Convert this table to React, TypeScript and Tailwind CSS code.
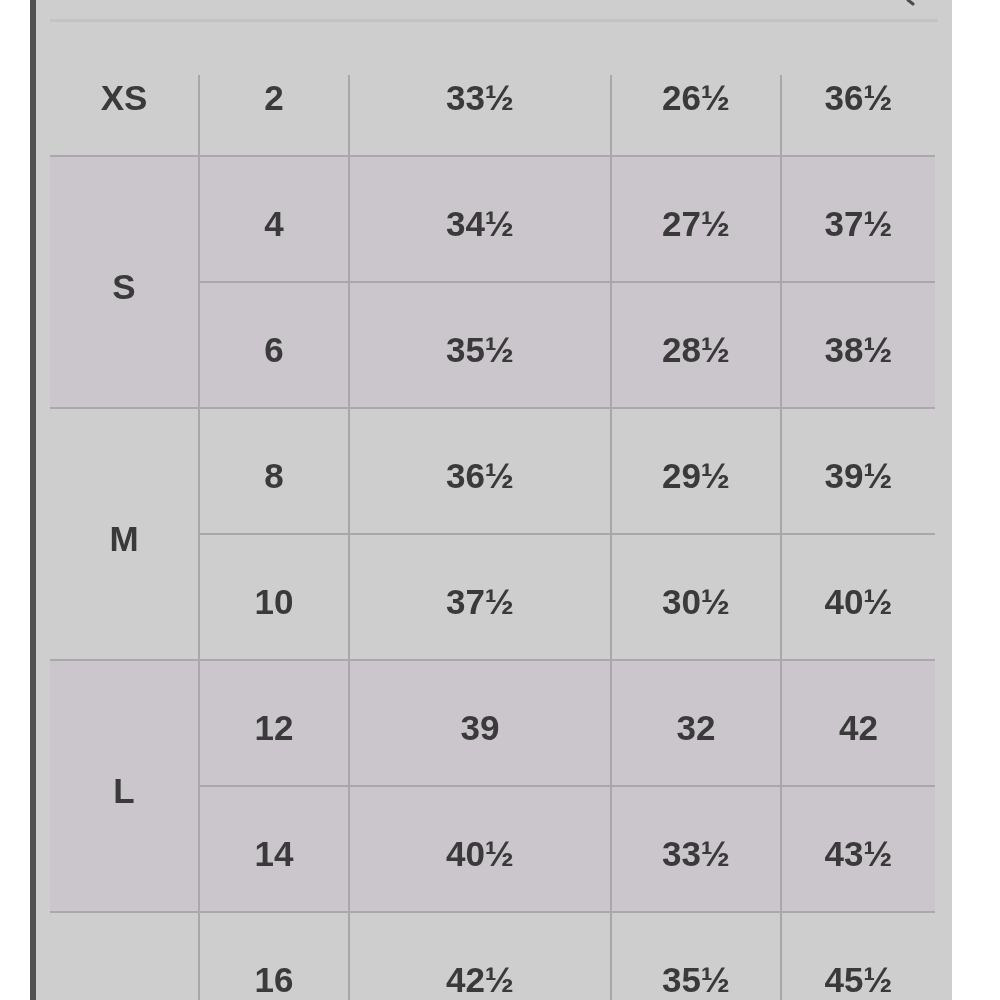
import React from 'react';

interface SizeGroup {
  label: string;
  rows: string[][];
  tint: boolean;
}

// Size chart rows - label column spans both sub rows of a group
const groups: SizeGroup[] = [
  { label: 'S', tint: true, rows: [['4', '34½', '27½', '37½'], ['6', '35½', '28½', '38½']] },
  { label: 'M', tint: false, rows: [['8', '36½', '29½', '39½'], ['10', '37½', '30½', '40½']] },
  { label: 'L', tint: true, rows: [['12', '39', '32', '42'], ['14', '40½', '33½', '43½']] },
  // last group is cut off by the bottom edge, only its first row shows
  { label: '', tint: false, rows: [['16', '42½', '35½', '45½']] },
];

const Value: React.FC<{ children: React.ReactNode }> = ({ children }) => (
  <span className="font-['Liberation_Sans',Arial,sans-serif] text-[35px] font-bold leading-none text-[#3a3a3a]">
    {children}
  </span>
);

const Group: React.FC<{ group: SizeGroup }> = ({ group }) => (
  <div
    className={`grid w-[885px] grid-cols-[148px_150px_262px_170px_155px] border-t-2 border-[#aca7ad] ${
      group.rows.length > 1 ? 'grid-rows-[124px_126px]' : 'grid-rows-[124px]'
    } ${group.tint ? 'bg-[#cbc6cb]' : 'bg-[#cecece]'}`}
  >
    <div className={`flex items-center justify-center pt-[8px] ${group.rows.length > 1 ? 'row-span-2' : ''}`}>
      {group.label && <Value>{group.label}</Value>}
    </div>
    {group.rows.map((row, r) =>
      row.map((v, i) => (
        <div
          key={`${r}-${i}`}
          className={`flex items-center justify-center border-l-2 border-[#aaa6ab] pt-[8px] ${
            r > 0 ? 'border-t-2' : ''
          }`}
        >
          <Value>{v}</Value>
        </div>
      ))
    )}
  </div>
);

export default function App() {
  return (
    <div className="flex h-[1000px] w-[1000px] overflow-hidden bg-white">
      <div className="ml-[30px] flex h-full w-[922px] flex-col border-l-[6px] border-[#525252] bg-[#cecece] blur-[0.6px]">
        {/* top strip with faint divider */}
        <div className="px-[14px]">
          <div className="flex h-[22px] justify-end border-b-[3px] border-[#c3c3c3]">
            <svg width="14" height="8" viewBox="0 0 14 8" className="mr-[20px]">
              <path d="M4 0 L9 4" stroke="#4a4a4a" strokeWidth="3" fill="none" strokeLinecap="round" />
            </svg>
          </div>
        </div>

        <div className="mt-[7px] pl-[14px]">
          {/* XS row, its column rules start lower down */}
          <div className="grid h-[126px] w-[885px] grid-cols-[148px_150px_262px_170px_155px] bg-[#cecece]">
            <div className="flex flex-col justify-end">
              <div className="flex h-[80px] justify-center pt-[5px]">
                <Value>XS</Value>
              </div>
            </div>
            {['2', '33½', '26½', '36½'].map((v, i) => (
              <div key={i} className="flex flex-col justify-end">
                <div className="flex h-[80px] justify-center border-l-2 border-[#aaa6ab] pt-[5px]">
                  <Value>{v}</Value>
                </div>
              </div>
            ))}
          </div>

          {groups.map((g, i) => (
            <Group key={i} group={g} />
          ))}
        </div>
      </div>
    </div>
  );
}
